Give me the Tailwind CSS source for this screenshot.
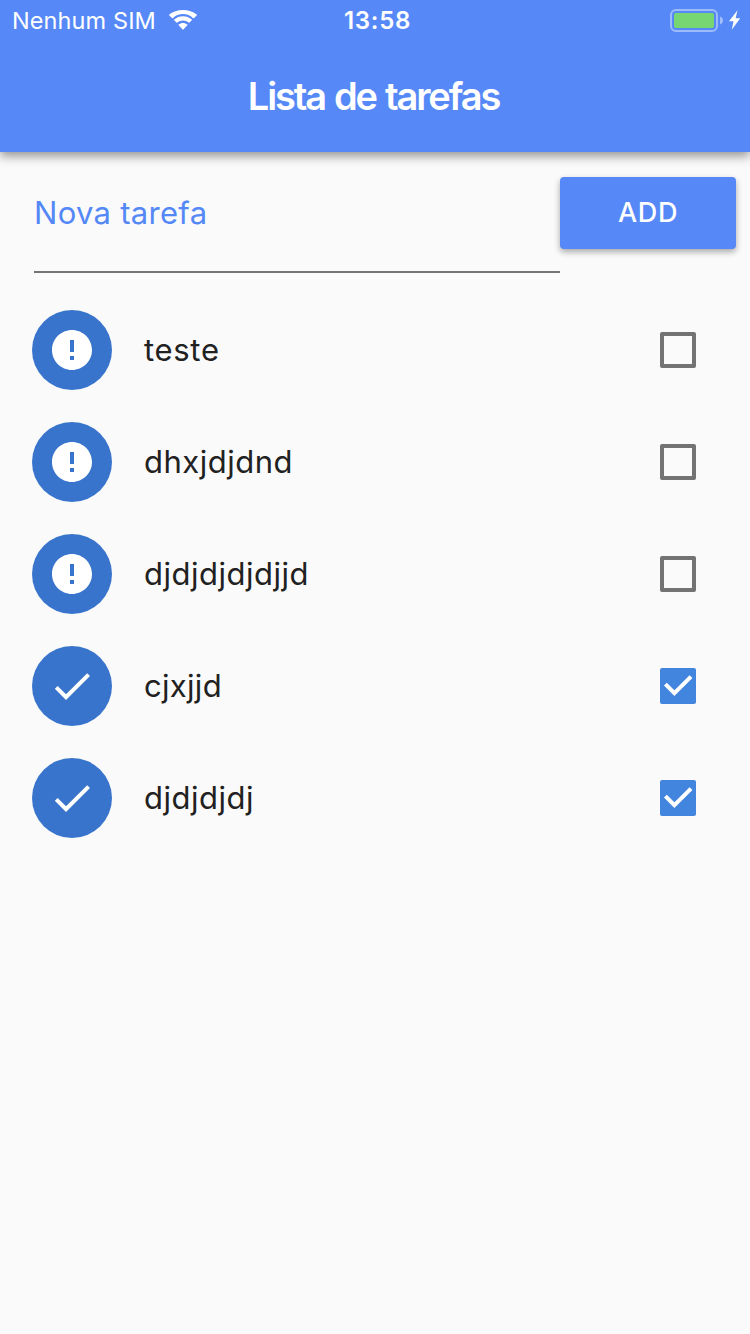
<!DOCTYPE html>
<html lang="pt">
<head>
<meta charset="utf-8">
<title>Lista de tarefas</title>
<script src="https://cdn.jsdelivr.net/npm/@tailwindcss/browser@4"></script>
</head>
<body class="bg-[#fafafa] font-['Inter','Liberation_Sans',sans-serif] w-[750px] h-[1334px] overflow-hidden text-[#212121]">
<svg class="hidden">
  <symbol id="error" viewBox="0 0 24 24"><path fill="#fff" d="M12 2C6.48 2 2 6.48 2 12s4.48 10 10 10 10-4.48 10-10S17.52 2 12 2zm1 15h-2v-2h2v2zm0-4h-2V7h2v6z"/></symbol>
  <symbol id="check" viewBox="0 0 24 24"><path fill="#fff" d="M9 16.17L4.83 12l-1.42 1.41L9 19 21 7l-1.41-1.41z"/></symbol>
  <symbol id="mark" viewBox="0 0 36 36"><path fill="none" stroke="#fff" stroke-width="4" d="M5.4 16.2L14.4 25.2L31 8.6"/></symbol>
</svg>
<header class="h-[152px] bg-[#5689f7] text-white shadow-[0_4px_10px_rgba(0,0,0,0.42)]">
  <div class="h-10 grid grid-cols-3 items-start">
    <div class="flex items-start pl-3">
      <span class="w-[157px] whitespace-nowrap text-[23.5px] leading-[42px] tracking-[0.1px]">Nenhum SIM</span>
      <svg class="w-7 h-[21px] mt-[10px]" viewBox="0 0 28 21" fill="#fff"><path d="M14 4.100c3.900 0 7.400 1.500 10.100 4.100.2.200.5.200.7 0l2.900-2.800c.3-.3.300-.6 0-.8C24 1.600 19.200 0 14 0S4 1.600.3 4.600c-.3.200-.3.500 0 .8l2.900 2.800c.2.200.5.200.7 0C6.600 5.600 10.100 4.100 14 4.100zM14 10.500c2.200 0 4.200.8 5.700 2.100.3.300.6.200.8 0l2.300-2.300c.3-.3.300-.6 0-.8-2.300-2.100-5.400-3.300-8.800-3.300s-6.500 1.200-8.800 3.300c-.3.200-.3.500 0 .8l2.300 2.300c.2.200.5.300.8 0 1.500-1.300 3.500-2.100 5.700-2.100zM14 12.900c-1.600 0-3.100.6-4.300 1.500-.3.200-.3.500 0 .8l3.900 4.200c.2.200.6.200.8 0l3.900-4.200c.3-.3.300-.6 0-.8-1.200-.9-2.700-1.500-4.300-1.500z"/></svg>
    </div>
    <div class="text-center pl-[5px] text-[24px] leading-[42px] font-semibold tracking-[0.7px]">13:58</div>
    <div class="flex items-start justify-end pr-[9px] pt-2">
      <svg class="w-[72px] h-6" viewBox="0 0 72 24">
        <rect x="2" y="2" width="46" height="21" rx="5" fill="none" stroke="#fff" stroke-opacity=".42" stroke-width="2"/>
        <rect x="5" y="5" width="40" height="15" rx="2" fill="#77d572"/>
        <path d="M51 8.500q3 1.200 3 4t-3 4z" fill="#fff" fill-opacity=".45"/>
        <path d="M68.500 2.200L60 13.200h4.500L62.800 21.800l8.400-11.500h-4.600z" fill="#fff"/>
      </svg>
    </div>
  </div>
  <h1 class="h-[112px] pr-[3px] text-center text-[38px] leading-[113px] font-semibold tracking-[-2.1px] [word-spacing:1.500px]">Lista de tarefas</h1>
</header>
<main>
  <div class="flex items-start pl-[34px] pr-[14px] pt-[25px]">
    <div class="w-[526px] h-24 border-b-2 border-[#757575] text-[#5588f7] text-[31px] leading-[71px] tracking-[0.3px]">Nova tarefa</div>
    <button class="w-[176px] h-[72px] rounded-[4px] bg-[#5689f7] text-white text-[27px] leading-[70px] font-medium tracking-[0.7px] shadow-[0_3px_6px_rgba(0,0,0,0.33)]">ADD</button>
  </div>
  <ul class="mt-[21px] text-[31px] leading-[109px]">
    <li class="flex items-center h-28 pl-8 pr-[54px]">
      <span class="size-20 rounded-full bg-[#3874cb] flex items-center justify-center"><svg class="size-12"><use href="#error"/></svg></span>
      <span class="ml-8 pb-[2px] flex-1 tracking-[0.7px]">teste</span>
      <span class="size-9 rounded-[2px] border-4 border-[#737373]"></span>
    </li>
    <li class="flex items-center h-28 pl-8 pr-[54px]">
      <span class="size-20 rounded-full bg-[#3874cb] flex items-center justify-center"><svg class="size-12"><use href="#error"/></svg></span>
      <span class="ml-8 pb-[2px] flex-1 tracking-[0.5px]">dhxjdjdnd</span>
      <span class="size-9 rounded-[2px] border-4 border-[#737373]"></span>
    </li>
    <li class="flex items-center h-28 pl-8 pr-[54px]">
      <span class="size-20 rounded-full bg-[#3874cb] flex items-center justify-center"><svg class="size-12"><use href="#error"/></svg></span>
      <span class="ml-8 pb-[2px] flex-1 tracking-[0.5px]">djdjdjdjdjjd</span>
      <span class="size-9 rounded-[2px] border-4 border-[#737373]"></span>
    </li>
    <li class="flex items-center h-28 pl-8 pr-[54px]">
      <span class="size-20 rounded-full bg-[#3874cb] flex items-center justify-center"><svg class="size-12"><use href="#check"/></svg></span>
      <span class="ml-8 pb-[2px] flex-1 tracking-[0.3px]">cjxjjd</span>
      <span class="size-9 rounded-[2px] bg-[#4285de]"><svg class="size-9"><use href="#mark"/></svg></span>
    </li>
    <li class="flex items-center h-28 pl-8 pr-[54px]">
      <span class="size-20 rounded-full bg-[#3874cb] flex items-center justify-center"><svg class="size-12"><use href="#check"/></svg></span>
      <span class="ml-8 pb-[2px] flex-1 tracking-[0.5px]">djdjdjdj</span>
      <span class="size-9 rounded-[2px] bg-[#4285de]"><svg class="size-9"><use href="#mark"/></svg></span>
    </li>
  </ul>
</main>
</body>
</html>
